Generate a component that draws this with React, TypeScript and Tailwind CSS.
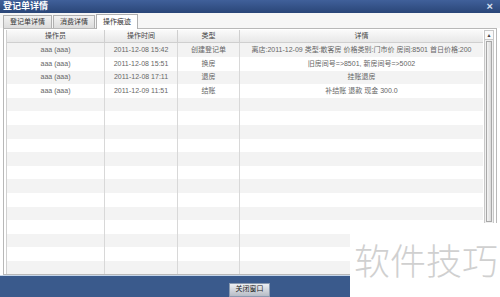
import React from 'react'

const rows = [
  { op: 'aaa (aaa)', time: '2011-12-08 15:42', type: '创建登记单', detail: '离店:2011-12-09 类型:散客房 价格类别:门市价 房间:8501 首日价格:200' },
  { op: 'aaa (aaa)', time: '2011-12-08 15:51', type: '换房', detail: '旧房间号=>8501, 新房间号=>5002' },
  { op: 'aaa (aaa)', time: '2011-12-08 17:11', type: '退房', detail: '挂账退房' },
  { op: 'aaa (aaa)', time: '2011-12-09 11:51', type: '结账', detail: '补结账 退款 现金 300.0' },
]

const EMPTY = 13

export default function App() {
  const all = [...rows, ...Array.from({ length: EMPTY }, () => null)]

  return (
    <div className="relative w-[500px] h-[297px] overflow-hidden bg-white flex flex-col font-['Liberation_Sans','Noto_Sans_CJK_SC',sans-serif]">
      {/* 标题栏 */}
      <div className="h-[13px] flex items-center justify-between px-[3px] bg-gradient-to-b from-[#40609a] to-[#2a4678]">
        <span className="text-[9px] leading-none font-bold text-white">登记单详情</span>
        <span className="text-[11px] leading-none font-bold text-[#d8e2f0] mr-[4px]">×</span>
      </div>

      {/* 标签页 */}
      <div className="h-[16px] flex items-end pl-[3px] bg-[#f6f6f6]">
        <div className="h-[13px] w-[49px] flex items-center justify-center border border-b-0 border-[#b0b0b0] bg-gradient-to-b from-[#f2f2f2] to-[#dcdcdc] text-[7px] text-[#333]">登记单详情</div>
        <div className="h-[13px] w-[42px] ml-[1px] flex items-center justify-center border border-b-0 border-[#b0b0b0] bg-gradient-to-b from-[#f2f2f2] to-[#dcdcdc] text-[7px] text-[#333]">消费详情</div>
        <div className="h-[15px] w-[42px] ml-[1px] flex items-center justify-center border border-b-0 border-[#b0b0b0] bg-white text-[7px] text-[#333] relative top-[1px]">操作痕迹</div>
      </div>

      {/* 内容区 */}
      <div className="flex-1 flex mx-[3px] border border-[#b8b8b8] bg-white pl-[2px] pt-[1px] pr-[2px]">
        <div className="flex-1 flex flex-col border-l border-[#d0d0d0]">
          <div className="h-[13px] flex border-b border-[#cfcfcf] bg-gradient-to-b from-[#fafafa] to-[#e8e8e8] text-[7px] text-[#444]">
            <div className="w-[98px] flex items-center justify-center border-r border-[#cfcfcf]">操作员</div>
            <div className="w-[73px] flex items-center justify-center border-r border-[#cfcfcf]">操作时间</div>
            <div className="w-[62px] flex items-center justify-center border-r border-[#cfcfcf]">类型</div>
            <div className="flex-1 flex items-center justify-center">详情</div>
          </div>
          {all.map((r, i) => (
            <div key={i} className={`h-[13.6px] flex text-[7px] text-[#666] ${i % 2 === 0 ? 'bg-[#f3f3f3]' : 'bg-white'}`}>
              <div className="w-[98px] flex items-center justify-center border-r border-[#d8d8d8]">{r?.op}</div>
              <div className="w-[73px] flex items-center justify-center border-r border-[#d8d8d8]">{r?.time}</div>
              <div className="w-[62px] flex items-center justify-center border-r border-[#d8d8d8]">{r?.type}</div>
              <div className="flex-1 flex items-center justify-center whitespace-nowrap">{r?.detail}</div>
            </div>
          ))}
        </div>
        {/* 滚动条 */}
        <div className="w-[10px] ml-[1px] flex flex-col bg-[#f0f0f0] border border-[#c8c8c8]">
          <div className="h-[9px] flex items-center justify-center text-[5px] text-[#444] border-b border-[#c8c8c8] bg-[#fafafa]">▲</div>
          <div className="h-[181px] mx-[1px] mt-[1px] border border-[#a8a8a8] bg-gradient-to-r from-[#f4f4f4] to-[#dadada]" />
        </div>
      </div>

      {/* 底部 */}
      <div className="h-[1px] bg-[#c6d6ea]" />
      <div className="h-[21px] flex items-center justify-center bg-[#3a5a8c]">
        <button className="h-[14px] w-[41px] mt-[6px] -ml-[1px] flex items-center justify-center border border-[#8a9ab0] bg-gradient-to-b from-[#eef0f3] to-[#b6bcc6] text-[7px] text-[#222]">关闭窗口</button>
      </div>

      {/* 水印 */}
      <div className="absolute left-[350px] top-[223px] right-0 bottom-0 bg-white flex items-start justify-center pt-[18px] pl-[2px]">
        <span className="text-[36px] leading-none font-light text-[#d0d0d0] font-['Noto_Sans_CJK_SC',sans-serif]">软件技巧</span>
      </div>
    </div>
  )
}
